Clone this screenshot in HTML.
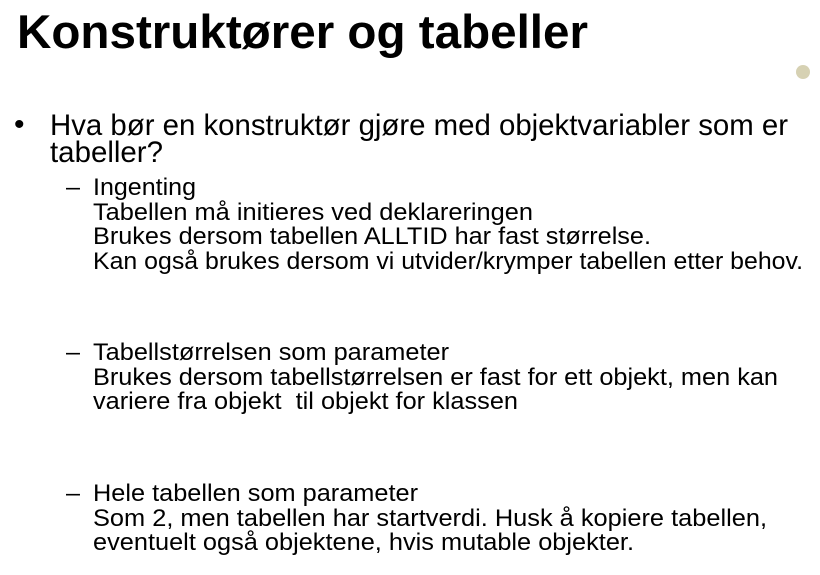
<!DOCTYPE html>
<html><head><meta charset="utf-8"><style>
body{margin:0;width:820px;height:575px;background:#fff;position:relative;overflow:hidden;font-family:"Liberation Sans",Arial,sans-serif;color:#000}
.l{position:absolute;white-space:nowrap;line-height:1;transform-origin:0 0}
.t{font-size:47px;font-weight:bold}
.b{font-size:30px}
.s{font-size:24.5px}
.dot{position:absolute;left:796px;top:65px;width:14px;height:14px;border-radius:50%;background:#d6d1b3}
</style></head><body>
<div class="l t" style="left:17px;top:8px;--w:571">Konstruktører og tabeller</div>
<div class="dot"></div>
<div class="l b" style="left:14px;top:110px">•</div>
<div class="l b" style="left:50px;top:110.5px;--w:738">Hva bør en konstruktør gjøre med objektvariabler som er</div>
<div class="l b" style="left:50px;top:137.5px;--w:113">tabeller?</div>

<div class="l s" style="left:66px;top:176px;--w:14">–</div>
<div class="l s" style="left:93px;top:176px;--w:103">Ingenting</div>
<div class="l s" style="left:93px;top:200.5px;--w:440">Tabellen må initieres ved deklareringen</div>
<div class="l s" style="left:93px;top:225px;--w:558">Brukes dersom tabellen ALLTID har fast størrelse.</div>
<div class="l s" style="left:93px;top:249.5px;--w:710">Kan også brukes dersom vi utvider/krymper tabellen etter behov.</div>

<div class="l s" style="left:66px;top:341px;--w:14">–</div>
<div class="l s" style="left:93px;top:341px;--w:356">Tabellstørrelsen som parameter</div>
<div class="l s" style="left:93px;top:365.5px;--w:685">Brukes dersom tabellstørrelsen er fast for ett objekt, men kan</div>
<div class="l s" style="left:93px;top:390px;--w:425">variere fra objekt&nbsp; til objekt for klassen</div>

<div class="l s" style="left:66px;top:482px;--w:14">–</div>
<div class="l s" style="left:93px;top:482px;--w:325">Hele tabellen som parameter</div>
<div class="l s" style="left:93px;top:506.5px;--w:674">Som 2, men tabellen har startverdi. Husk å kopiere tabellen,</div>
<div class="l s" style="left:93px;top:531px;--w:541">eventuelt også objektene, hvis mutable objekter.</div>
<script>
document.querySelectorAll('.l').forEach(function(e){
var w=parseFloat(getComputedStyle(e).getPropertyValue('--w'));
if(w){var a=e.getBoundingClientRect().width;if(a>0)e.style.transform='scaleX('+(w/a)+')';}
});
</script>
</body></html>
